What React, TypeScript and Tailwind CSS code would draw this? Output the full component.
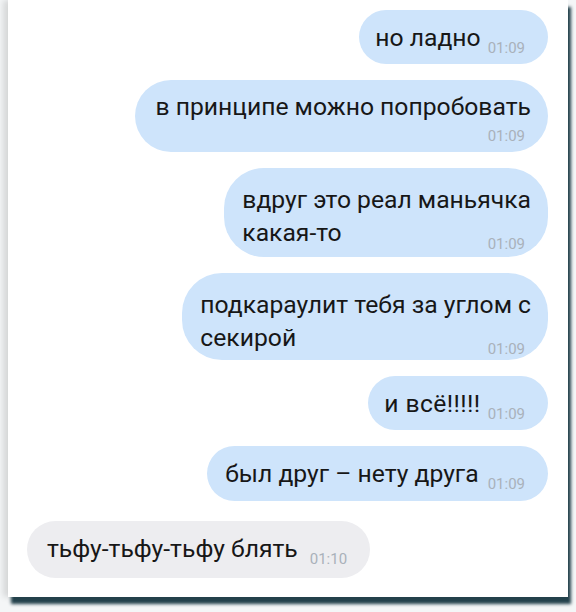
const font = { fontFamily: 'Roboto, "Noto Sans", sans-serif' };

type Msg = { lines: string[]; time: string; out: boolean; timeBelow?: boolean; h: string; gap?: string };

const messages: Msg[] = [
  { lines: ['но ладно'], time: '01:09', out: true, h: 'h-[54px]' },
  { lines: ['в принципе можно попробовать'], time: '01:09', out: true, timeBelow: true, h: 'h-[72px]' },
  { lines: ['вдруг это реал маньячка', 'какая-то'], time: '01:09', out: true, h: 'h-[89px]' },
  { lines: ['подкараулит тебя за углом с', 'секирой'], time: '01:09', out: true, h: 'h-[87px]' },
  { lines: ['и всё!!!!!'], time: '01:09', out: true, h: 'h-[54px]' },
  { lines: ['был друг – нету друга'], time: '01:09', out: true, h: 'h-[55px]', gap: 'gap-[9px] pl-[18px]' },
  { lines: ['тьфу-тьфу-тьфу блять'], time: '01:10', out: false, h: 'h-[57px]', gap: 'gap-[12px] pl-[20px] pr-[19px]' },
];

function Time({ t }: { t: string }) {
  return <span className="block text-[15px] leading-4 text-[#a9b1ba] whitespace-nowrap">{t}</span>;
}

function Bubble({ m }: { m: Msg }) {
  const bg = m.out ? 'bg-[#cee4fb]' : 'bg-[#ededf0]';
  const txt = 'text-[24.7px] leading-8 text-[#171717] whitespace-nowrap';

  if (m.lines.length === 1 && !m.timeBelow) {
    return (
      <div className={`${bg} ${m.h} rounded-full pl-[16px] pr-[23px] pt-[12px] flex items-start ${m.gap ?? 'gap-[7px]'}`}>
        <span className={`${txt} ${m.lines[0] === 'и всё!!!!!' ? 'tracking-[0.4px]' : ''}`}>{m.lines[0]}</span>
        <span className="mt-[18px]"><Time t={m.time} /></span>
      </div>
    );
  }
  if (m.timeBelow) {
    return (
      <div className={`${bg} ${m.h} rounded-[36px] pl-[20px] pr-[17px] pt-[11px] flex flex-col`}>
        <span className={txt}>{m.lines[0]}</span>
        <span className="self-end mr-[6px] mt-[5px]"><Time t={m.time} /></span>
      </div>
    );
  }
  return (
    <div className={`${bg} ${m.h} rounded-[40px] pl-[18px] pr-[17px] pt-[15px] grid content-start`}>
      <span className={`col-start-1 row-start-1 ${txt}`}>
        {m.lines.map((l, i) => (
          <span key={i} className="block leading-[33px]">{l}</span>
        ))}
      </span>
      <span className="col-start-1 row-start-1 self-end justify-self-end mr-[6px] -mb-[3px]">
        <Time t={m.time} />
      </span>
    </div>
  );
}

export default function App() {
  return (
    <div className="w-[576px] h-[612px] bg-[#f4f6f7] overflow-hidden" style={font}>
      <div className="ml-[8px] w-[560px] h-[597px] bg-white shadow-[3px_7px_3px_rgba(24,56,66,0.95),-5px_0_6px_rgba(0,0,0,0.12)] flex flex-col pt-[10px] pr-[20px] pl-[19px] gap-[16px]">
        {messages.map((m, i) => (
          <div key={i} className={`flex ${m.out ? 'justify-end' : 'justify-start mt-[4px]'}`}>
            <Bubble m={m} />
          </div>
        ))}
      </div>
    </div>
  );
}
